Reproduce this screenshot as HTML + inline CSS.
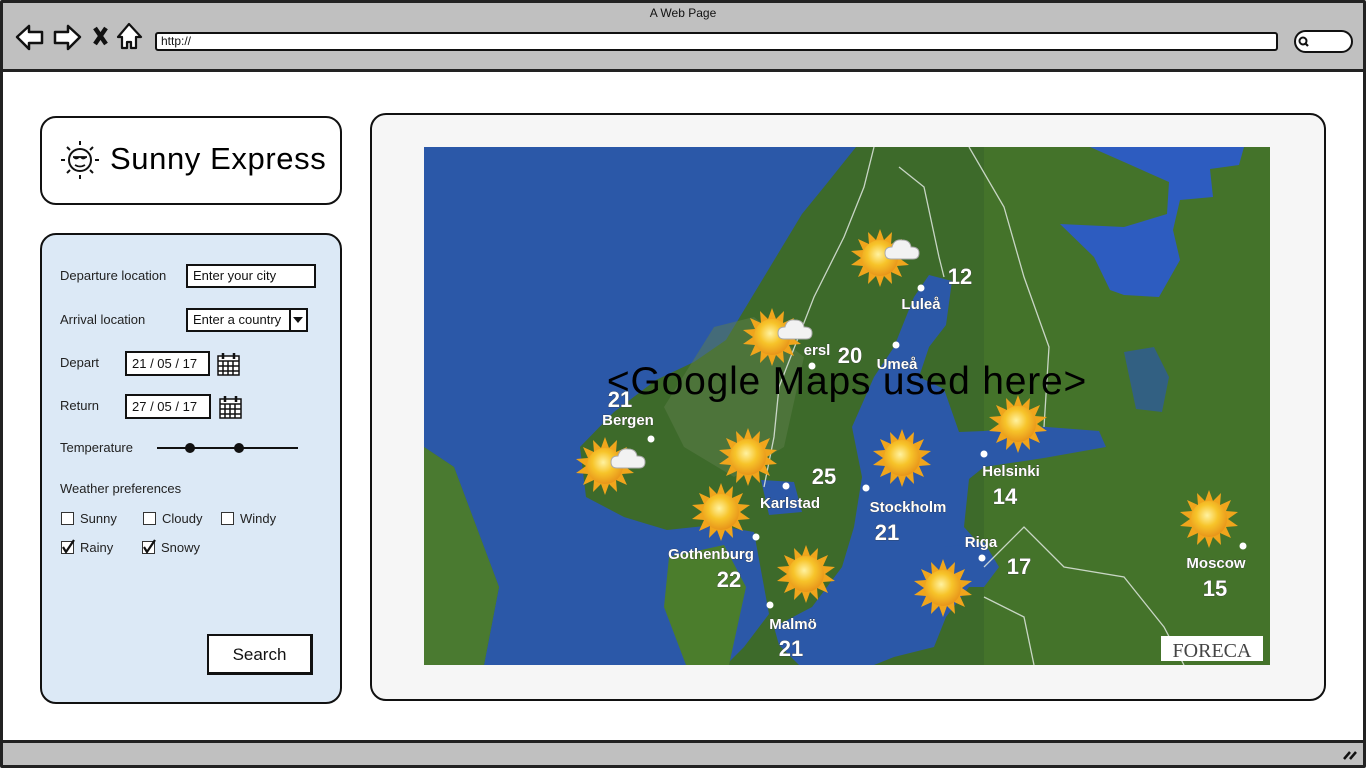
<!DOCTYPE html>
<html><head><meta charset="utf-8">
<style>
*{margin:0;padding:0;box-sizing:border-box}
body{width:1366px;height:768px;overflow:hidden;background:#fff;font-family:"Liberation Sans",sans-serif;position:relative;color:#111}
.abs{position:absolute}
.lbl{position:absolute;font-size:13px;color:#222}
.inp{position:absolute;background:#fff;border:2px solid #111;font-size:13px;padding:2px 5px;line-height:16px}
.cb{position:absolute;width:13px;height:13px;border:1.5px solid #333;background:#fff}
.mt{font-weight:bold;fill:#fff;stroke:#333;stroke-width:0.6;paint-order:stroke;font-family:"Liberation Sans",sans-serif}
</style></head><body>
<div class="abs" style="left:0;top:0;width:1366px;height:768px;border:3px solid #222;border-radius:2px"></div>
<div class="abs" style="left:3px;top:3px;width:1360px;height:69px;background:#c0c0c0;border-bottom:3px solid #222"></div>
<div class="abs" style="left:0;top:6px;width:1366px;text-align:center;font-size:12px">A Web Page</div>
<svg class="abs" style="left:0;top:0" width="160" height="60">
<path d="M17 37 L29 26 L29 32 L42 32 L42 43 L29 43 L29 49 Z" fill="#fff" stroke="#111" stroke-width="2.5" stroke-linejoin="round"/>
<path d="M80 37 L68 26 L68 32 L55 32 L55 43 L68 43 L68 49 Z" fill="#fff" stroke="#111" stroke-width="2.5" stroke-linejoin="round"/>
<path d="M95 28 L106 44 M106 28 L95 44" stroke="#111" stroke-width="4.5"/>
<path d="M129 24 L141 37 L136 37 L136 48 L131 48 L131 42 L127 42 L127 48 L122 48 L122 37 L118 37 Z" fill="#fff" stroke="#111" stroke-width="2.2" stroke-linejoin="round"/>
</svg>
<div class="abs" style="left:155px;top:32px;width:1123px;height:19px;background:#fff;border:2.5px solid #111;border-radius:3px;font-size:12px;padding-left:4px;line-height:14px">http://</div>
<div class="abs" style="left:1294px;top:30px;width:59px;height:23px;background:#fff;border:2.5px solid #111;border-radius:12px"></div>
<svg class="abs" style="left:1296px;top:34px" width="20" height="16"><circle cx="7" cy="7" r="3.5" fill="none" stroke="#111" stroke-width="2"/><path d="M9.5 9.5 L12 12" stroke="#111" stroke-width="2.2"/></svg>
<div class="abs" style="left:3px;top:740px;width:1360px;height:25px;background:#c0c0c0;border-top:3px solid #222"></div>
<svg class="abs" style="left:1340px;top:745px" width="20" height="18"><path d="M4 14 L10 7 M10 14 L16 7" stroke="#111" stroke-width="2.5"/></svg>

<div class="abs" style="left:40px;top:116px;width:302px;height:89px;border:2px solid #111;border-radius:16px;background:#fff"></div>
<svg class="abs" style="left:55px;top:136px" width="50" height="50">
<circle cx="25" cy="24" r="11" fill="#fff" stroke="#111" stroke-width="2"/>
<path d="M18 21 h14 M19 21 q2 3 5 0 M26 21 q2 3 5 0 M20 29 q5 3 10 0" stroke="#111" stroke-width="1.8" fill="none"/>
<path d="M25 5 v4 M25 39 v4 M6 24 h4 M40 24 h4 M12 11 l3 3 M38 11 l-3 3 M12 37 l3 -3 M38 37 l-3 -3" stroke="#111" stroke-width="2"/>
</svg>
<div class="abs" style="left:110px;top:141px;font-size:31px;letter-spacing:0.6px;color:#000">Sunny Express</div>

<div class="abs" style="left:40px;top:233px;width:302px;height:471px;border:2px solid #111;border-radius:16px;background:#dce9f6"></div>
<div class="lbl" style="left:60px;top:268px">Departure location</div>
<div class="inp" style="left:186px;top:264px;width:130px;height:24px">Enter your city</div>
<div class="lbl" style="left:60px;top:312px">Arrival location</div>
<div class="inp" style="left:186px;top:308px;width:122px;height:24px;padding-right:0">Enter a country</div>
<div class="abs" style="left:289px;top:308px;width:19px;height:24px;border:2px solid #111;background:#fff"></div>
<svg class="abs" style="left:292px;top:316px" width="12" height="8"><path d="M1 1 L11 1 L6 7 Z" fill="#111"/></svg>
<div class="lbl" style="left:60px;top:355px">Depart</div>
<div class="inp" style="left:125px;top:351px;width:85px;height:25px;padding:3px 5px">21 / 05 / 17</div>
<div class="lbl" style="left:60px;top:398px">Return</div>
<div class="inp" style="left:125px;top:394px;width:86px;height:25px;padding:3px 5px">27 / 05 / 17</div>
<svg class="abs" style="left:216px;top:351px" width="26" height="70">
<g fill="none" stroke="#111" stroke-width="1.5"><rect x="2" y="5" width="21" height="19" fill="#fff"/><path d="M2 10 h21 M2 15 h21 M2 20 h21 M7 10 v14 M12 10 v14 M17 10 v14"/><path d="M7 2 v6 M18 2 v6" stroke-width="2.5"/></g>
<g transform="translate(2,43)" fill="none" stroke="#111" stroke-width="1.5"><rect x="2" y="5" width="21" height="19" fill="#fff"/><path d="M2 10 h21 M2 15 h21 M2 20 h21 M7 10 v14 M12 10 v14 M17 10 v14"/><path d="M7 2 v6 M18 2 v6" stroke-width="2.5"/></g>
</svg>
<div class="lbl" style="left:60px;top:440px">Temperature</div>
<svg class="abs" style="left:155px;top:438px" width="146" height="20"><path d="M2 10 L143 10" stroke="#111" stroke-width="2"/><circle cx="35" cy="10" r="5" fill="#111"/><circle cx="84" cy="10" r="5" fill="#111"/></svg>
<div class="lbl" style="left:60px;top:481px">Weather preferences</div>
<div class="cb" style="left:61px;top:512px"></div><div class="lbl" style="left:80px;top:511px">Sunny</div>
<div class="cb" style="left:143px;top:512px"></div><div class="lbl" style="left:162px;top:511px">Cloudy</div>
<div class="cb" style="left:221px;top:512px"></div><div class="lbl" style="left:240px;top:511px">Windy</div>
<div class="cb" style="left:61px;top:541px"></div><div class="lbl" style="left:80px;top:540px">Rainy</div>
<div class="cb" style="left:142px;top:541px"></div><div class="lbl" style="left:161px;top:540px">Snowy</div>
<svg class="abs" style="left:60px;top:538px" width="100" height="18"><path d="M3 9 L6 14 L14 2" stroke="#111" stroke-width="2.2" fill="none"/><path d="M84 9 L87 14 L95 2" stroke="#111" stroke-width="2.2" fill="none"/></svg>
<div class="abs" style="left:207px;top:634px;width:106px;height:41px;border:2px solid #111;border-right-width:3px;border-bottom-width:3px;background:#fff;font-size:17px;text-align:center;line-height:37px">Search</div>

<div class="abs" style="left:370px;top:113px;width:956px;height:588px;border:2px solid #111;border-radius:16px;background:#f6f6f6"></div>
<svg class="abs" style="left:424px;top:147px" width="846" height="518" viewBox="0 0 846 518">
<defs>
<radialGradient id="sg" cx="45%" cy="40%" r="60%"><stop offset="0" stop-color="#fff2a0"/><stop offset="0.5" stop-color="#f7c42a"/><stop offset="1" stop-color="#e8951a"/></radialGradient>
<g id="sun"><polygon points="0,-29 4,-18 12,-26 11,-14 22,-19 17,-8 29,-7 19,0 29,7 17,8 22,19 11,14 12,26 4,18 0,29 -4,18 -12,26 -11,14 -22,19 -17,8 -29,7 -19,0 -29,-7 -17,-8 -22,-19 -11,-14 -12,-26 -4,-18" fill="#f0a51c"/><circle r="18" fill="url(#sg)"/></g>
<g id="cloud"><path d="M-14 8 q-6 0 -6 -6 q0 -6 7 -6 q2 -8 10 -7 q8 0 9 7 q8 0 8 6 q0 6 -6 6 z" fill="#f2f2f2" stroke="#aaa" stroke-width="1"/></g>
</defs>
<rect width="846" height="518" fill="#3d6a2a"/>
<rect x="560" y="0" width="286" height="518" fill="#4a7a2c" opacity="0.6"/>
<polygon points="0,0 432,0 400,40 378,67 340,130 302,193 270,215 232,233 190,265 156,300 162,350 200,370 243,383 290,378 330,385 345,467 320,500 302,518 60,518 75,440 45,360 30,320 0,300" fill="#2b58a8"/>
<polygon points="0,300 30,320 45,360 75,440 60,518 0,518" fill="#4a7a30"/>
<polygon points="245,410 300,398 322,440 305,518 262,518 240,460" fill="#4b7d2c"/>
<polygon points="505,128 528,134 522,178 505,200 495,230 520,242 535,285 560,284 610,279 675,284 682,300 620,311 560,320 545,332 540,380 558,400 545,440 522,470 510,500 470,510 450,518 375,518 355,498 350,480 388,460 418,420 430,380 438,330 428,280 450,230 470,200 490,150" fill="#2b58a8"/>
<polygon points="520,400 560,395 575,420 560,440 535,440" fill="#2b58a8"/>
<polygon points="666,0 820,0 815,18 786,22 789,50 756,53 749,83 756,113 735,150 700,148 686,143 670,110 636,77 700,80 743,67 745,35 700,15" fill="#2d5cc0"/>
<polygon points="700,205 730,200 745,230 738,265 712,262" fill="#2b58a8" opacity="0.7"/>
<polygon points="337,333 370,335 378,365 345,368" fill="#2b58a8"/>
<polygon points="290,180 330,170 380,210 360,300 310,330 260,300 240,260" fill="#5e7d4a" opacity="0.5"/>
<g fill="none" stroke="#e0e8e0" stroke-width="1.3" opacity="0.85">
<path d="M450 0 L440 40 L420 90 L390 150 L355 240 L350 290 L340 340"/>
<path d="M475 20 L500 40 L515 110 L520 130"/>
<path d="M545 0 L580 60 L600 130 L625 200 L620 280"/>
<path d="M560 420 L600 380 L640 420 L700 430 L740 480 L760 518"/>
<path d="M560 450 L600 470 L610 518"/>
</g>
<g fill="#fff"><circle cx="497" cy="141" r="3.5"/><circle cx="472" cy="198" r="3.5"/><circle cx="388" cy="219" r="3.5"/><circle cx="227" cy="292" r="3.5"/><circle cx="362" cy="339" r="3.5"/><circle cx="442" cy="341" r="3.5"/><circle cx="560" cy="307" r="3.5"/><circle cx="558" cy="411" r="3.5"/><circle cx="332" cy="390" r="3.5"/><circle cx="346" cy="458" r="3.5"/><circle cx="819" cy="399" r="3.5"/></g>
<use href="#sun" x="456" y="111"/><use href="#cloud" x="481" y="104"/>
<use href="#sun" x="348" y="190"/><use href="#cloud" x="374" y="184"/>
<use href="#sun" x="181" y="319"/><use href="#cloud" x="207" y="313"/>
<use href="#sun" x="324" y="310"/>
<use href="#sun" x="297" y="365"/>
<use href="#sun" x="478" y="311"/>
<use href="#sun" x="594" y="277"/>
<use href="#sun" x="382" y="427"/>
<use href="#sun" x="519" y="441"/>
<use href="#sun" x="785" y="372"/>
<g class="mt" text-anchor="middle">
<text x="536" y="137" font-size="22">12</text>
<text x="497" y="162" font-size="15">Luleå</text>
<text x="426" y="216" font-size="22">20</text>
<text x="473" y="222" font-size="15">Umeå</text>
<text x="393" y="208" font-size="15">ersl</text>
<text x="196" y="260" font-size="22">21</text>
<text x="204" y="278" font-size="15">Bergen</text>
<text x="400" y="337" font-size="22">25</text>
<text x="366" y="361" font-size="15">Karlstad</text>
<text x="484" y="365" font-size="15">Stockholm</text>
<text x="463" y="393" font-size="22">21</text>
<text x="587" y="329" font-size="15">Helsinki</text>
<text x="581" y="357" font-size="22">14</text>
<text x="557" y="400" font-size="15">Riga</text>
<text x="595" y="427" font-size="22">17</text>
<text x="287" y="412" font-size="15">Gothenburg</text>
<text x="305" y="440" font-size="22">22</text>
<text x="369" y="482" font-size="15">Malmö</text>
<text x="367" y="509" font-size="22">21</text>
<text x="792" y="421" font-size="15">Moscow</text>
<text x="791" y="449" font-size="22">15</text>
</g>
<rect x="737" y="489" width="102" height="25" fill="#fff"/>
<text x="788" y="510" text-anchor="middle" font-size="20" fill="#444" font-family="Liberation Serif,serif">FORECA</text>
</svg>
<div class="abs" style="left:424px;top:360px;width:846px;text-align:center;font-size:39px;letter-spacing:0.8px;color:#000">&lt;Google Maps used here&gt;</div>
</body></html>
